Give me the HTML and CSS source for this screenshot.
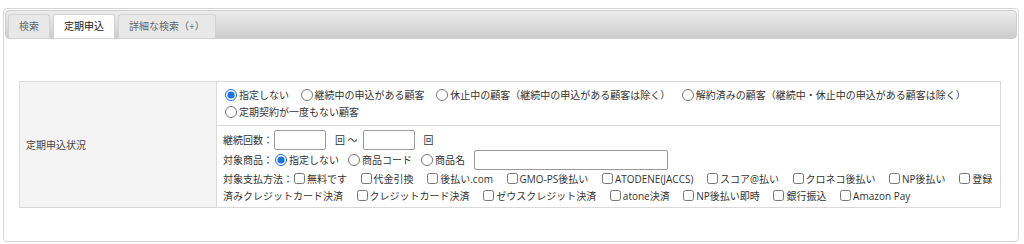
FILE: index.html
```html
<!DOCTYPE html>
<html lang="ja">
<head>
    <meta charset="UTF-8">
    <meta name="viewport" content="width=device-width, initial-scale=1.0">
    <title>定期申込検索</title>
    <link rel="stylesheet" href="styles.css">
</head>
<body>
    <div class="search-box">
        <div class="tab-bar">
            <div class="tab">検索</div>
            <div class="tab active">定期申込</div>
            <div class="tab">詳細な検索（+）</div>
        </div>
        <div class="panel">
            <table class="search-table">
                <tr>
                    <th rowspan="2">定期申込状況</th>
                    <td class="status">
                        <label class="opt"><input type="radio" name="status" checked>指定しない</label>
                        <label class="opt"><input type="radio" name="status">継続中の申込がある顧客</label>
                        <label class="opt"><input type="radio" name="status">休止中の顧客（継続中の申込がある顧客は除く）</label>
                        <label class="opt"><input type="radio" name="status">解約済みの顧客（継続中・休止中の申込がある顧客は除く）</label>
                        <label class="opt"><input type="radio" name="status">定期契約が一度もない顧客</label>
                    </td>
                </tr>
                <tr>
                    <td class="cond">
                        <div class="line">
                            継続回数：<input type="text" class="num-box"><span class="unit">回 ～</span><input type="text" class="num-box"><span class="unit">回</span>
                        </div>
                        <div class="line">
                            対象商品：<label class="opt"><input type="radio" name="item" checked>指定しない</label>
                            <label class="opt"><input type="radio" name="item">商品コード</label>
                            <label class="opt"><input type="radio" name="item">商品名</label>
                            <input type="text" class="name-box">
                        </div>
                        <div class="pay">
                            対象支払方法：<label class="chk"><input type="checkbox">無料です</label>
                            <label class="chk"><input type="checkbox">代金引換</label>
                            <label class="chk"><input type="checkbox">後払い.com</label>
                            <label class="chk"><input type="checkbox">GMO-PS後払い</label>
                            <label class="chk"><input type="checkbox">ATODENE(JACCS)</label>
                            <label class="chk"><input type="checkbox">スコア@払い</label>
                            <label class="chk"><input type="checkbox">クロネコ後払い</label>
                            <label class="chk"><input type="checkbox">NP後払い</label>
                            <label class="chk wrap"><input type="checkbox">登録済みクレジットカード決済</label>
                            <label class="chk"><input type="checkbox">クレジットカード決済</label>
                            <label class="chk"><input type="checkbox">ゼウスクレジット決済</label>
                            <label class="chk"><input type="checkbox">atone決済</label>
                            <label class="chk"><input type="checkbox">NP後払い即時</label>
                            <label class="chk"><input type="checkbox">銀行振込</label>
                            <label class="chk"><input type="checkbox">Amazon Pay</label>
                        </div>
                    </td>
                </tr>
            </table>
        </div>
    </div>
</body>
</html>
```
FILE: styles.css
```css
body {
    margin: 0;
    background: #ffffff;
    font-family: "Open Sans", "Noto Sans CJK JP", sans-serif;
    font-size: 10px;
    color: #333;
}
.search-box {
    margin: 8px 5px 0 3px;
    height: 230px;
    border: 1px solid #d6d6d6;
    border-radius: 4px;
    padding: 1px;
}
.tab-bar {
    display: flex;
    gap: 3px;
    align-items: flex-end;
    height: 27px;
    padding: 0 2px;
    border: 1px solid #cfcfcf;
    border-radius: 4px;
    background: linear-gradient(to bottom, #ececec, #cdcdcd);
}
.tab {
    height: 23px;
    line-height: 23px;
    padding: 0 10px;
    border: 1px solid #d3d3d3;
    border-bottom: none;
    border-radius: 3px 3px 0 0;
    background: #e8e8e8;
    color: #666;
}
.tab.active {
    background: #ffffff;
    color: #222;
}
.panel {
    padding: 42px 18px 0 14px;
}
.search-table {
    width: 982px;
    border-collapse: collapse;
}
.search-table th,
.search-table td {
    border: 1px solid #d9d9d9;
    text-align: left;
}
.search-table th {
    width: 184px;
    padding: 0 6px;
    background: #f4f4f4;
    font-weight: normal;
    color: #444;
}
.search-table td {
    padding: 5px 5px 4px 6px;
    line-height: 17px;
}
.search-table td.cond {
    padding: 4px 5px 2px 6px;
}
.opt {
    white-space: nowrap;
    margin-right: 7px;
}
.chk {
    white-space: nowrap;
    margin-right: 10px;
}
.chk.wrap {
    white-space: normal;
}
.opt input {
    width: 12px;
    height: 12px;
    margin: 0 2px 0 2px;
    vertical-align: -2px;
    accent-color: #1a73e8;
}
.chk input {
    width: 11px;
    height: 11px;
    margin: 0 2px 0 1px;
    vertical-align: -1px;
}
.line {
    height: 20px;
    line-height: 20px;
    display: flex;
    align-items: center;
}
.line .opt {
    display: flex;
    align-items: center;
}
.num-box {
    width: 48px;
    height: 16px;
    margin: 0 9px 0 1px;
    border: 1px solid #999;
    border-radius: 2px;
    padding: 1px;
}
.unit {
    margin-right: 4px;
}
.name-box {
    width: 190px;
    height: 16px;
    margin-left: 2px;
    border: 1px solid #999;
    border-radius: 2px;
    padding: 1px;
}
.pay {
    line-height: 17px;
    margin-top: 1px;
}
```
